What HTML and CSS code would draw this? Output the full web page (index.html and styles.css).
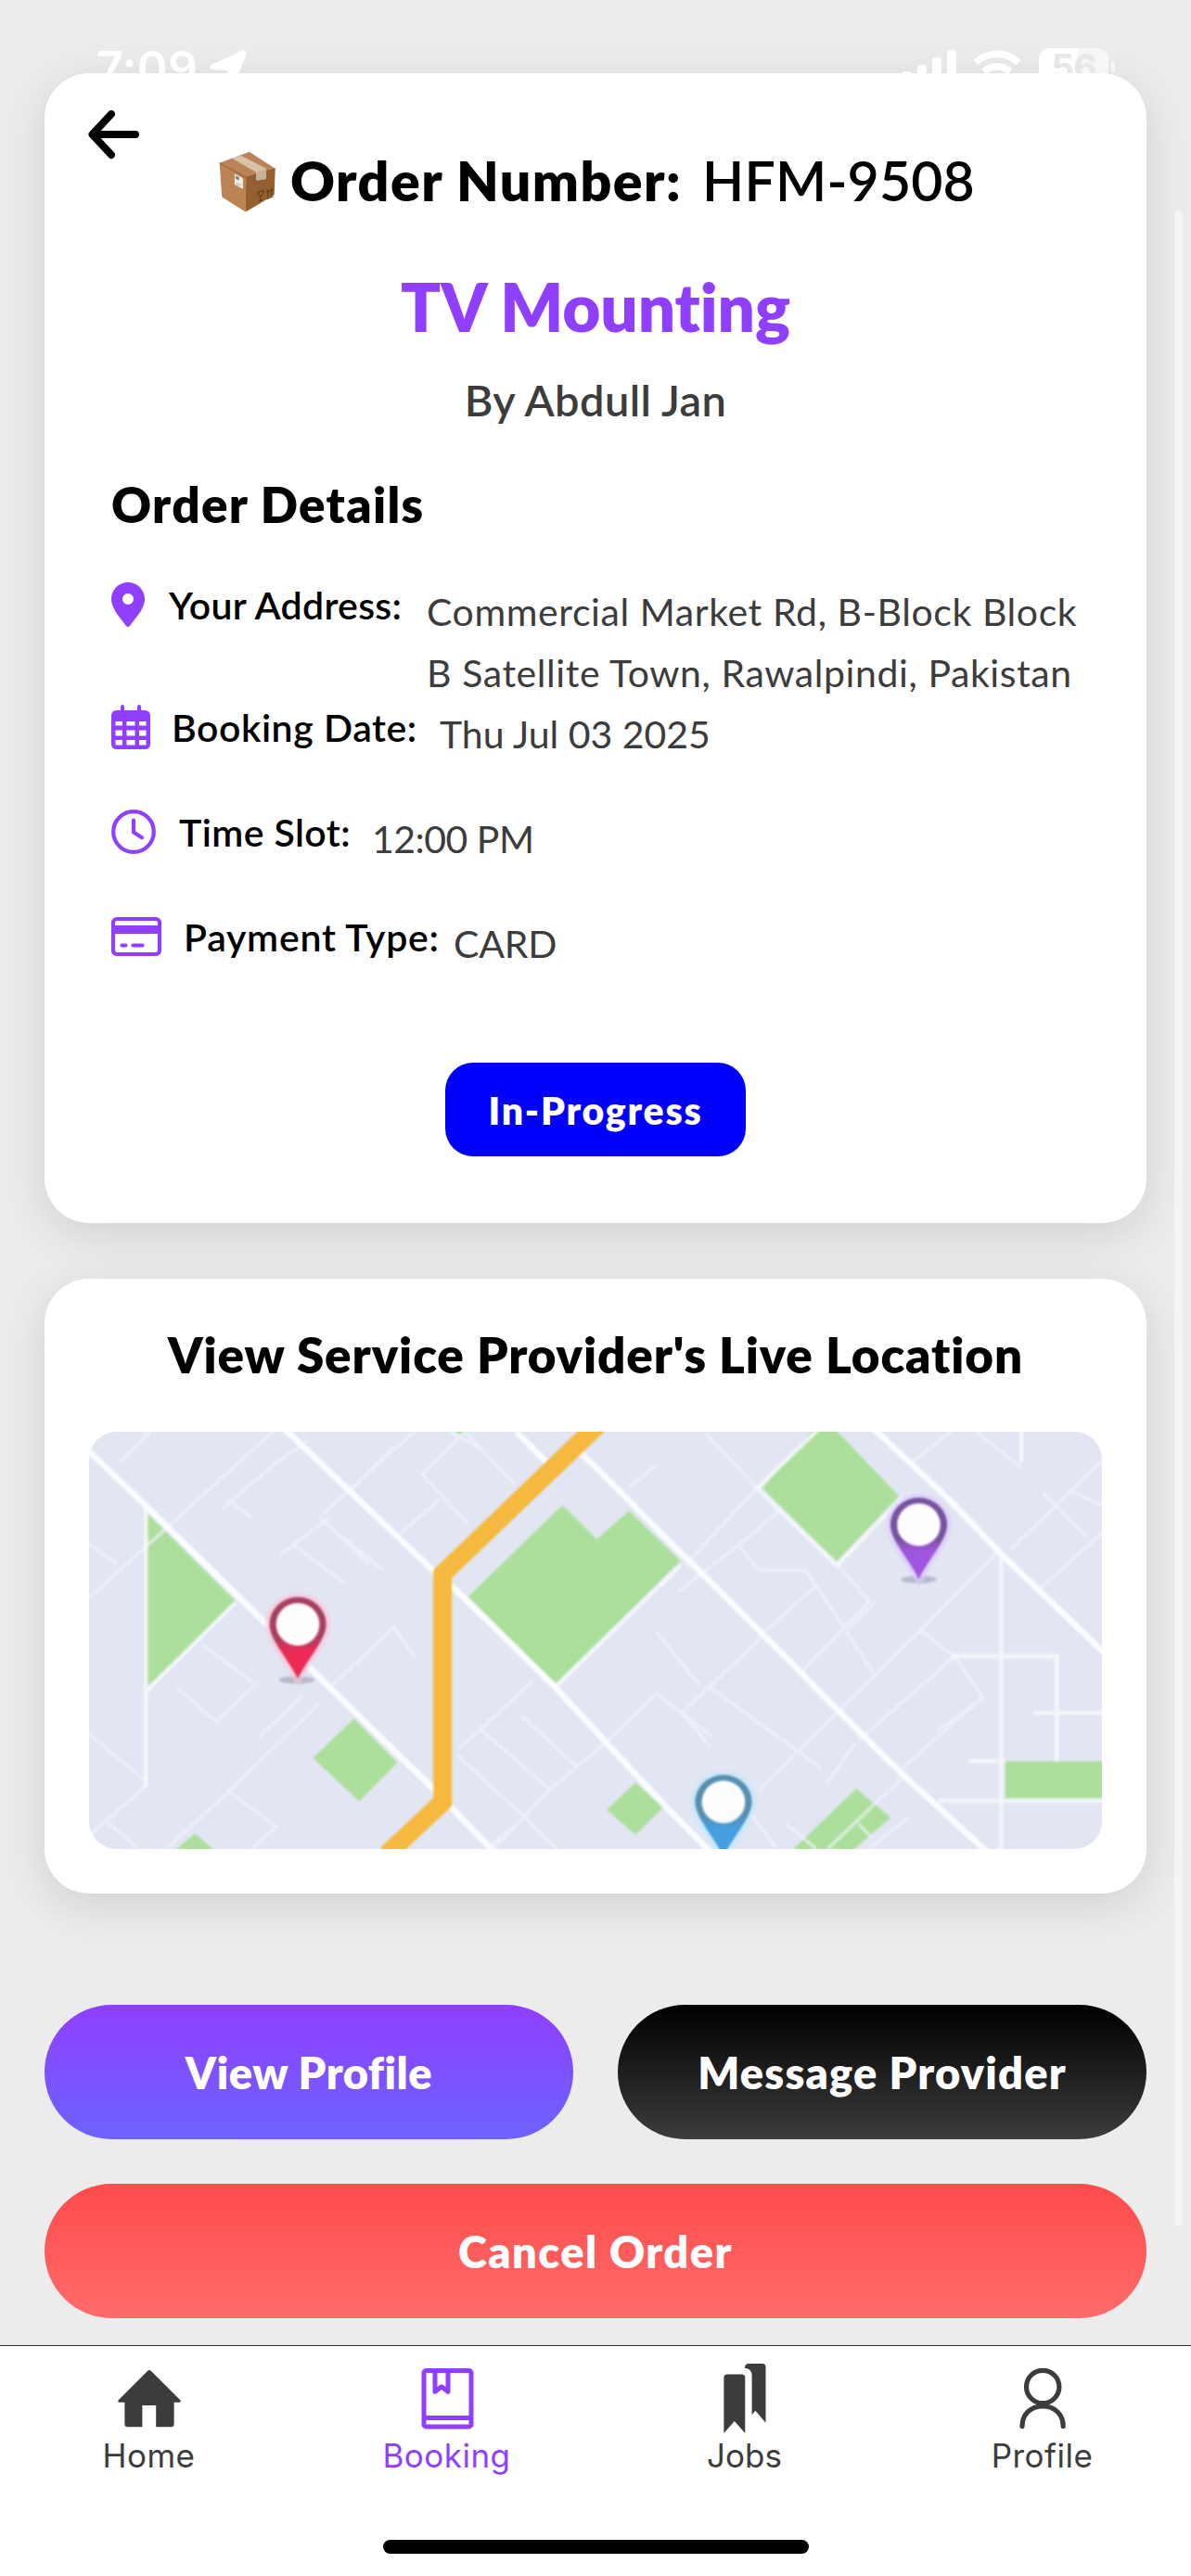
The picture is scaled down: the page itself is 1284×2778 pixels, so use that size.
FILE: index.html
```html
<!DOCTYPE html>
<html lang="en">
<head>
<meta charset="utf-8">
<title>Order HFM-9508</title>
<link rel="stylesheet" href="styles.css">
</head>
<body>
<div class="screen">
  <header class="status">
    <span class="status-time">7:09</span>
    <svg class="status-arrow" width="42" height="42" viewBox="0 0 42 42"><path d="M36 .6C39 -.6 41.600 2 40.400 5L27.500 38C26 42 21.500 41.500 21 37.500L20.500 24Q20.300 22 18.500 21.800L4 21C.5 20.500 .2 17 3.500 15.500Z" fill="#fff"/></svg>
    <svg class="status-signal" width="58" height="38" viewBox="0 0 58 38" fill="#fff"><rect x="0" y="23" width="10" height="15" rx="3"/><rect x="16" y="16" width="10" height="22" rx="3"/><rect x="32" y="8" width="10" height="30" rx="3"/><rect x="48" y="0" width="10" height="38" rx="3"/></svg>
    <svg class="status-wifi" width="52" height="38" viewBox="0 0 52 38" fill="none" stroke="#fff" stroke-width="7.500"><path d="M3 13.500A33 33 0 0 1 49 13.500"/><path d="M12 23.500A20 20 0 0 1 40 23.500"/><path d="M26 37L19 29Q26 24 33 29Z" fill="#fff" stroke="none"/></svg>
    <span class="battery"><span class="battery-level">56</span></span>
    <span class="battery-nub"></span>
  </header>

  <main class="content">
    <section class="card order">
      <svg class="back" width="56" height="54" viewBox="0 0 56 54" fill="none" stroke="#000" stroke-width="8" stroke-linecap="round" stroke-linejoin="round"><path d="M25 5L4.500 27L25 49M5 27H51"/></svg>
      <div class="order-number">
        <svg width="63" height="66" viewBox="45 38 190 198">
          <path d="M50 76L147 40L231 94L136 123Z" fill="#b98457"/>
          <path d="M50 76L136 123L135 235L58 187Z" fill="#bd8453"/>
          <path d="M136 123L231 94L228 180L135 235Z" fill="#94602f"/>
          <path d="M50 76L136 123L231 94" fill="none" stroke="#8a552c" stroke-width="3"/>
          <path d="M90 61L118 51L202 94V128L170 133L169 106Z" fill="#d8c3a8"/>
          <path d="M170 107L202 95V128L170 133Z" fill="#c4b196"/>
          <path d="M99 111L126 126V160L99 146Z" fill="#f1f1ef"/>
          <path d="M103 118L113 123V132L103 127ZM104 139L121 148M104 145L116 151" fill="#777" stroke="#888" stroke-width="1.500"/>
          <path d="M174 171L193 166Q193 181 183 184Q175 183 174 171M183 184V199M178 200L189 196M208 189V167M219 184V162M204 171L208 163L212 169M215 166L219 158L223 164M204 193L224 185" fill="none" stroke="#573617" stroke-width="3"/>
        </svg>
        <span class="order-label">Order Number:</span>
        <span class="order-value">HFM-9508</span>
      </div>
      <h1 class="service">TV Mounting</h1>
      <p class="provider">By Abdull Jan</p>

      <div class="details">
        <h2 class="details-title">Order Details</h2>
        <div class="row row-address">
          <svg width="36" height="48" viewBox="0 0 36 48"><path fill-rule="evenodd" d="M18 0C8 0 0 8 0 18C0 29 12 41 16 47Q18 49 20 47C24 41 36 29 36 18C36 8 28 0 18 0ZM18 12A6 6 0 1 1 18 24A6 6 0 1 1 18 12Z"/></svg>
          <span class="label">Your Address:</span>
          <span class="value">Commercial Market Rd, B-Block Block<br>B Satellite Town, Rawalpindi, Pakistan</span>
        </div>
        <div class="row row-date">
          <svg width="42" height="48" viewBox="0 0 42 48"><path fill-rule="evenodd" d="M10 2Q10 0 12 0T14 2V6H28V2Q28 0 30 0T32 2V6H36Q42 6 42 12V42Q42 48 36 48H6Q0 48 0 42V12Q0 6 6 6H10ZM4.500 18V22.500H12V18ZM16.500 18V22.500H25.500V18ZM30 18V22.500H37.500V18ZM4.500 27.500V33.500H12V27.500ZM16.500 27.500V33.500H25.500V27.500ZM30 27.500V33.500H37.500V27.500ZM4.500 38V43.500H12V38ZM16.500 38V43.500H25.500V38ZM30 38V43.500H37.500V38Z"/></svg>
          <span class="label">Booking Date:</span>
          <span class="value">Thu Jul 03 2025</span>
        </div>
        <div class="row row-time">
          <svg width="48" height="48" viewBox="0 0 48 48" class="line-icon"><circle cx="24" cy="24" r="21.800"/><path d="M24 11.500V24.500L33 30.200" stroke-linecap="round" stroke-linejoin="round"/></svg>
          <span class="label">Time Slot:</span>
          <span class="value">12:00 PM</span>
        </div>
        <div class="row row-payment">
          <svg width="54" height="48" viewBox="0 0 54 48" class="line-icon"><rect x="2" y="5" width="50" height="38" rx="4"/><path d="M2 16.500H52" stroke-width="9" class="stripe"/><path d="M11.500 33.500H15.500M23.500 33.500H33.500" stroke-linecap="round"/></svg>
          <span class="label">Payment Type:</span>
          <span class="value">CARD</span>
        </div>
      </div>
      <div class="badge">In-Progress</div>
    </section>

    <section class="card location">
      <h2 class="location-title">View Service Provider's Live Location</h2>
      <svg class="map" viewBox="42 42 2853 1350" preserveAspectRatio="none">
        <defs>
          <g id="pin"><path d="M-80 0A80 88 0 0 1 80 0C80 48 30 110 0 175C-30 110 -80 48 -80 0Z"/><ellipse rx="61" ry="69" fill="#fffdfd"/></g>
          <linearGradient id="red" x1="0" y1="0" x2="0" y2="1"><stop offset=".5" stop-color="#a83f62"/><stop offset=".66" stop-color="#ea2a55"/></linearGradient>
          <linearGradient id="purple" x1="0" y1="0" x2="0" y2="1"><stop offset=".5" stop-color="#76539f"/><stop offset=".66" stop-color="#a055de"/></linearGradient>
          <linearGradient id="blue" x1="0" y1="0" x2="0" y2="1"><stop offset=".5" stop-color="#568fb0"/><stop offset=".66" stop-color="#439fdf"/></linearGradient>
        </defs>
        <rect x="0" y="0" width="2940" height="1440" fill="#e2e6f3"/>
        <g class="soft">
          <g class="park">
            <path d="M205 305L455 590L205 868Z"/>
            <path d="M1375 280L1472 390L1563 298L1708 460L1355 858L1110 575Z"/>
            <path d="M2085 30H2140L2323 250L2148 462L1939 225Z"/>
            <path d="M788 970L910 1112L803 1238L673 1098Z"/>
            <path d="M340 1342L270 1410H410Z"/>
            <path d="M1581 1177L1658 1258L1581 1346L1500 1265Z"/>
            <path d="M2203 1196L2300 1290L2180 1410H2010Z"/>
            <path d="M2623 1108H2920V1228H2623Z"/>
            <path d="M1060 30L1090 54L1120 30Z"/>
          </g>
          <g class="lane">
            <path d="M42 580L600 0M42 405L120 470M130 140L215 42M200 42V70M420 290L560 150L660 70M430 260L500 320M700 310L900 100L960 42M690 320L870 490M580 440L720 320M620 410L760 530M730 360L830 470M920 370L1030 260M980 180L1110 340M980 180L1100 42L1240 210M1150 100L1060 42M780 230L900 90"/>
            <path d="M690 920L450 1190L260 1391M360 730L500 850M200 1190L42 1350M42 1020L200 1170M290 870L400 980L520 850M720 870L900 675L960 770M430 1200L570 1320L500 1391M90 1300L180 1391M640 900L520 1030"/>
            <path d="M1290 850L1140 1010L1080 1070M1140 1000L1340 1200M1260 960L1420 1130M1080 1090L1270 1290L1160 1391M1500 1045L1340 1200L1180 1391M1270 1290L1360 1391"/>
            <path d="M1563 220L1640 150M1780 50L1880 170L1923 225L1723 470M1985 300L1870 410L1930 490H2060L2090 540L1943 690M1870 410L1700 560M1640 690L1760 860M2148 470L2240 590L2040 830M2090 540L2250 820M1943 700L1713 950L1790 1060M2603 430L2380 690L2153 945L1930 1200M1793 870L2103 1130M1500 1045L1640 890L1800 1030M2260 590L2180 680M2380 680L2480 770L2210 1040M2480 770L2560 900L2333 1130M2540 920L2430 1010M2200 1050L2120 1180"/>
            <path d="M2920 110L2640 420M2730 240L2850 380M2895 370L2720 550M2670 160L2540 42M2360 140L2470 42M2895 280L2800 230M1980 1391L1880 1240M2003 1310L2090 1391M2123 1391L2333 1160M2210 1310L2250 1360M2350 1290L2240 1391"/>
          </g>
          <g class="street">
            <path d="M202 280V1190M455 595L205 880M1708 475L1355 868M2100 30L1923 225L2148 475L2333 255M2611 450V1410M2668 30V140M2473 768H2775M2768 768V1110M2703 952H2920M2520 1108H2623M2433 1236H2920"/>
          </g>
          <g class="road">
            <path d="M30 92L205 285L520 640L720 870L1010 1195L1190 1410M590 30L1010 490L1090 570L1355 868L1500 1050L1663 1250L1800 1410M1245 42L1330 140M1400 85L1463 150L1723 450L1943 700L2153 945L2333 1150L2580 1410M2250 30L2463 260L2613 440L2920 778"/>
          </g>
          <path class="highway" d="M1475 20L1038 502V1240L880 1410"/>
          <g fill="#8d90a6" opacity=".5"><ellipse cx="627" cy="845" rx="50" ry="12"/><ellipse cx="2379" cy="520" rx="50" ry="12"/></g>
          <use href="#pin" x="630" y="665" class="halo halo-red"/>
          <use href="#pin" x="2379" y="343" class="halo halo-purple"/>
          <use href="#pin" x="1829" y="1240" class="halo halo-blue"/>
          <use href="#pin" x="630" y="665" fill="url(#red)"/>
          <use href="#pin" x="2379" y="343" fill="url(#purple)"/>
          <use href="#pin" x="1829" y="1240" fill="url(#blue)"/>
        </g>
      </svg>
    </section>

    <div class="actions">
      <button class="btn btn-profile">View Profile</button>
      <button class="btn btn-message">Message Provider</button>
      <button class="btn btn-cancel">Cancel Order</button>
    </div>
  </main>
  <div class="scrollbar"></div>

  <nav class="tabbar">
    <div class="tabs">
      <a class="tab"><svg width="76" height="76" viewBox="0 0 76 76" fill="currentColor"><path d="M36 9Q38 7.200 40 9L71.500 40.500Q72.500 42.600 70 42.700H64.600V66Q64.600 69.200 61.500 69.200H45.200V46H30.400V69.200H14.500Q11.400 69.200 11.400 66V42.700H6Q3.500 42.600 4.500 40.500Z"/></svg><span class="t-home">Home</span></a>
      <a class="tab active"><svg width="76" height="76" viewBox="0 0 76 76" fill="none" stroke="currentColor" stroke-width="5"><rect x="13" y="8.500" width="51" height="60.500" rx="2.500"/><path d="M13 59.500H64M25 9V31.300L32 25.800L39 31.300V9" stroke-linejoin="round"/></svg><span class="t-booking">Booking</span></a>
      <a class="tab"><svg width="76" height="76" viewBox="0 0 76 76" fill="currentColor"><path d="M15.400 16Q15.400 12.400 19 12.400H34.700Q38.300 12.400 38.300 16V76L26.800 63L15.400 76Z"/><path d="M38 5.700Q38 1 42 1H57Q60.500 1 60.500 4.500V64.700L49.400 51.700L45.600 56V14Q45.300 6 38 5.700Z"/></svg><span class="t-jobs">Jobs</span></a>
      <a class="tab"><svg width="76" height="76" viewBox="0 0 76 76" fill="none" stroke="currentColor" stroke-width="5.200" stroke-linecap="round"><circle cx="38.200" cy="26" r="17.700"/><path d="M16 68.500C16 56 25 46.800 38.200 46.800S60.200 56 60.200 68.500"/></svg><span class="t-profile">Profile</span></a>
    </div>
    <div class="home-indicator"></div>
  </nav>
</div>
</body>
</html>
```
FILE: styles.css
```css
* { box-sizing: border-box; }
body, h1, h2, p { margin: 0; }
body { background: #ececec; font-family: Lato, sans-serif; font-variant-ligatures: none; color: #000; }

.screen {
  position: relative;
  display: flex;
  flex-direction: column;
  width: 1284px;
  height: 2778px;
  overflow: hidden;
  background: #ececec;
}

/* status bar, cut off by the first card */
.status {
  position: relative;
  z-index: 1;
  display: flex;
  align-items: flex-start;
  flex: none;
  height: 79px;
  padding: 52px 0 0 104px;
  overflow: hidden;
  color: #fff;
  font-family: Inter, sans-serif;
}
.status-time { width: 121px; margin-top: -9px; font-size: 50px; line-height: 60px; font-weight: 600; letter-spacing: .32px; }
.status-arrow { margin-top: 2px; }
.status-signal { margin: 2px 0 0 706px; }
.status-wifi { margin: 2px 0 0 18px; }
.battery {
  width: 75px;
  height: 40px;
  margin-left: 19px;
  border-radius: 12px;
  background: linear-gradient(90deg, #fff 42px, #f6f6f6 42px);
}
.battery-level { display: block; color: #e8e8e8; font-size: 39px; font-weight: 700; line-height: 42px; text-align: center; letter-spacing: -1px; }
.battery-nub { width: 4px; height: 13px; margin: 14px 0 0 3px; border-radius: 0 6px 6px 0; background: #f6f6f6; }

.content { flex: none; height: 2450px; padding: 0 48px; }
.card {
  display: flex;
  flex-direction: column;
  border-radius: 48px;
  background: #fff;
  box-shadow: 0 12px 48px rgba(0, 0, 0, .12);
}

.order { height: 1240px; padding: 39px 0 72px; }
.back { flex: none; margin-left: 47px; }
.order-number { display: flex; align-items: center; flex: none; height: 72px; margin: -13px 0 0 187px; font-size: 59px; line-height: 72px; white-space: nowrap; }
.order-number svg { flex: none; margin-top: 2px; }
.order-label { width: 444px; margin-left: 15px; font-weight: 800; letter-spacing: 1.45px; }
.order-value { font-weight: 600; letter-spacing: .15px; }
.service { margin-top: 58px; color: #903fff; font-size: 71px; line-height: 84px; font-weight: 800; letter-spacing: -.1px; text-align: center; }
.provider { margin-top: 28px; color: #3c3c3c; font-size: 47px; line-height: 60px; font-weight: 600; letter-spacing: .4px; text-align: center; }

.details { margin-top: 51px; padding: 0 0 0 72px; }
.details-title { margin-bottom: 51px; font-size: 53px; line-height: 64px; font-weight: 800; letter-spacing: 1.3px; }
.row { display: flex; align-items: flex-start; min-height: 113px; font-size: 41px; white-space: nowrap; }
.row svg { flex: none; margin-top: 1px; fill: #903fff; }
.row .line-icon { fill: none; stroke: #903fff; stroke-width: 4.2px; }
.line-icon .stripe { stroke-width: 9px; }
.label { flex: none; margin-top: 1px; line-height: 50px; font-weight: 600; }
.value { color: #3c3c3c; line-height: 66px; }
.row-address .label { width: 278px; margin-left: 26px; letter-spacing: .3px; }
.row-address .value { letter-spacing: .58px; }
.row-date .label { width: 289px; margin-left: 23px; letter-spacing: .55px; }
.row-date .value { letter-spacing: 0; }
.row-time .label { width: 208px; margin-left: 25px; letter-spacing: .42px; }
.row-time .value { letter-spacing: -.5px; }
.row-payment .label { width: 291px; margin-left: 24px; letter-spacing: .75px; }
.row-payment .value { letter-spacing: -.2px; }

.badge {
  align-self: center;
  width: 324px;
  height: 101px;
  margin-top: 48px;
  padding-top: 1px;
  border-radius: 30px;
  background: #00f;
  color: #fff;
  font-size: 41px;
  font-weight: 800;
  line-height: 101px;
  letter-spacing: 1.75px;
  text-align: center;
}

.location { margin-top: 60px; padding: 50px 48px 48px; }
.location-title { margin-bottom: 51px; font-size: 53px; line-height: 64px; font-weight: 800; letter-spacing: .88px; text-align: center; white-space: nowrap; }
.map { display: block; width: 1092px; height: 450px; border-radius: 30px; }
.soft { filter: blur(3px); }
.park { fill: #acdf9b; }
.lane, .street, .road, .highway { fill: none; }
.lane path, .street path, .road path, .highway { vector-effect: non-scaling-stroke; }
.lane { stroke: #f1f4fc; stroke-width: 3.5px; opacity: .7; }
.street { stroke: #f4f9fb; stroke-width: 4.5px; opacity: .9; }
.road { stroke: #fafdff; stroke-width: 6.5px; }
.highway { stroke: #f5b93f; stroke-width: 20px; }
.halo { stroke-width: 26px; opacity: .55; }
.halo-red { fill: #ffc4d6; stroke: #ffc4d6; }
.halo-purple { fill: #ddc9ff; stroke: #ddc9ff; }
.halo-blue { fill: #bdeaff; stroke: #bdeaff; }

.actions { display: grid; grid-template-columns: 1fr 1fr; gap: 48px; margin-top: 120px; }
.btn {
  height: 145px;
  padding: 1px 0 0;
  border: 0;
  border-radius: 72.5px;
  color: #fff;
  font: 800 47px/144px Lato, sans-serif;
}
.btn-profile { background: linear-gradient(#903fff, #6c63ff); letter-spacing: .5px; }
.btn-message { background: linear-gradient(#000, #3c3c3c); letter-spacing: 1.2px; }
.btn-cancel { grid-column: 1 / -1; background: linear-gradient(#ff4b4b, #ff6b6b); letter-spacing: 1.45px; }

.scrollbar { position: absolute; top: 227px; left: 1266px; width: 9px; height: 2174px; border-radius: 5px; background: #f4f4f4; }

.tabbar { flex: none; height: 249px; border-top: 1px solid #27272a; background: #fff; }
.tabs { display: grid; grid-template-columns: repeat(4, 1fr); padding-top: 18px; }
.tab { display: flex; flex-direction: column; align-items: center; gap: 3px; color: #3c3c3c; font: 400 35px/42px Inter, sans-serif; }
.active { color: #903fff; }
.t-home, .t-booking, .t-profile { letter-spacing: .48px; }
.home-indicator { width: 459px; height: 15px; margin: 70px auto 0; border-radius: 8px; background: #000; }
```
